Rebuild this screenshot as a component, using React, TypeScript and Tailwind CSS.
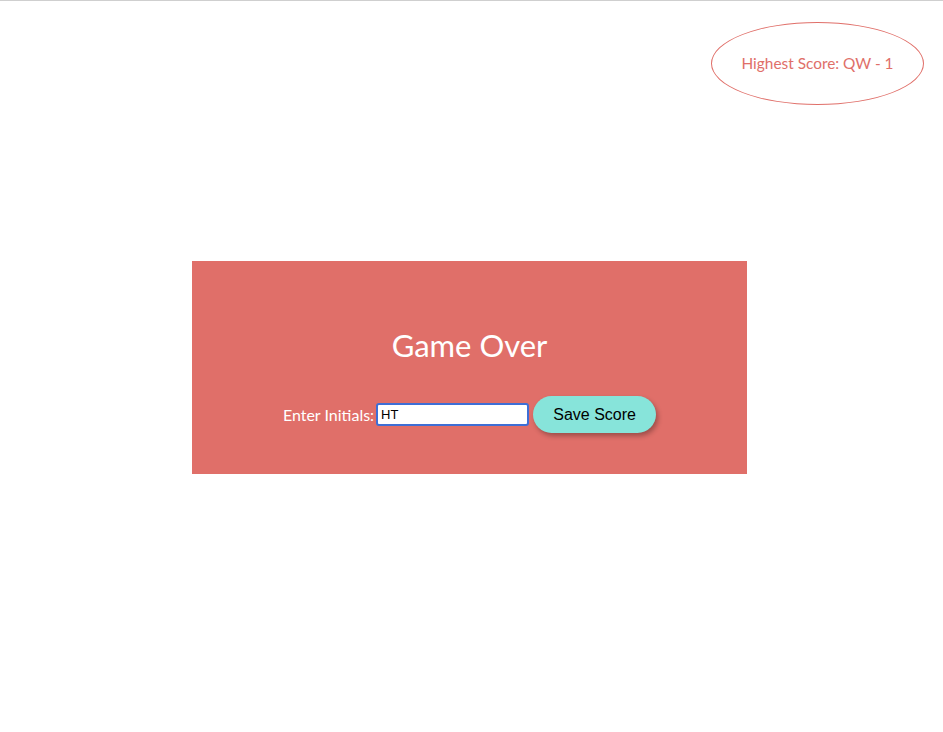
import React from "react";

export default function App() {
  return (
    <div className="min-h-[732px] w-full bg-white border-t border-[#cfcfcf]" style={{ fontFamily: "Lato, 'Open Sans', sans-serif" }}>
      <div className="flex justify-end pt-[21px] pr-[19px]">
        <div className="flex h-[83px] w-[213px] items-center justify-center rounded-[50%] border border-[#e06f69] text-[15.4px] text-[#e06f69]">
          Highest Score: QW - 1
        </div>
      </div>
      <div className="ml-[192px] mt-[156px] flex h-[213px] w-[555px] flex-col items-center bg-[#e06f69] pt-[64px]">
        <h1 className="text-[31px] leading-[40px] text-white">Game Over</h1>
        <div className="mt-[31px] flex items-center">
          <label className="text-[16px] text-white">Enter Initials:</label>
          <input
            defaultValue="HT"
            className="ml-[2px] h-[23px] w-[153px] rounded-[3px] border-2 border-[#3e6fd6] bg-white px-[3px] text-[13px] text-black outline-none"
            style={{ fontFamily: "'Liberation Sans', Arial, sans-serif" }}
          />
          <button
            className="ml-[4px] h-[37px] w-[123px] rounded-full bg-[#87e4da] text-[16px] text-black shadow-[2px_3px_5px_rgba(0,0,0,0.3)]"
            style={{ fontFamily: "'Liberation Sans', Arial, sans-serif" }}
          >
            Save Score
          </button>
        </div>
      </div>
    </div>
  );
}
